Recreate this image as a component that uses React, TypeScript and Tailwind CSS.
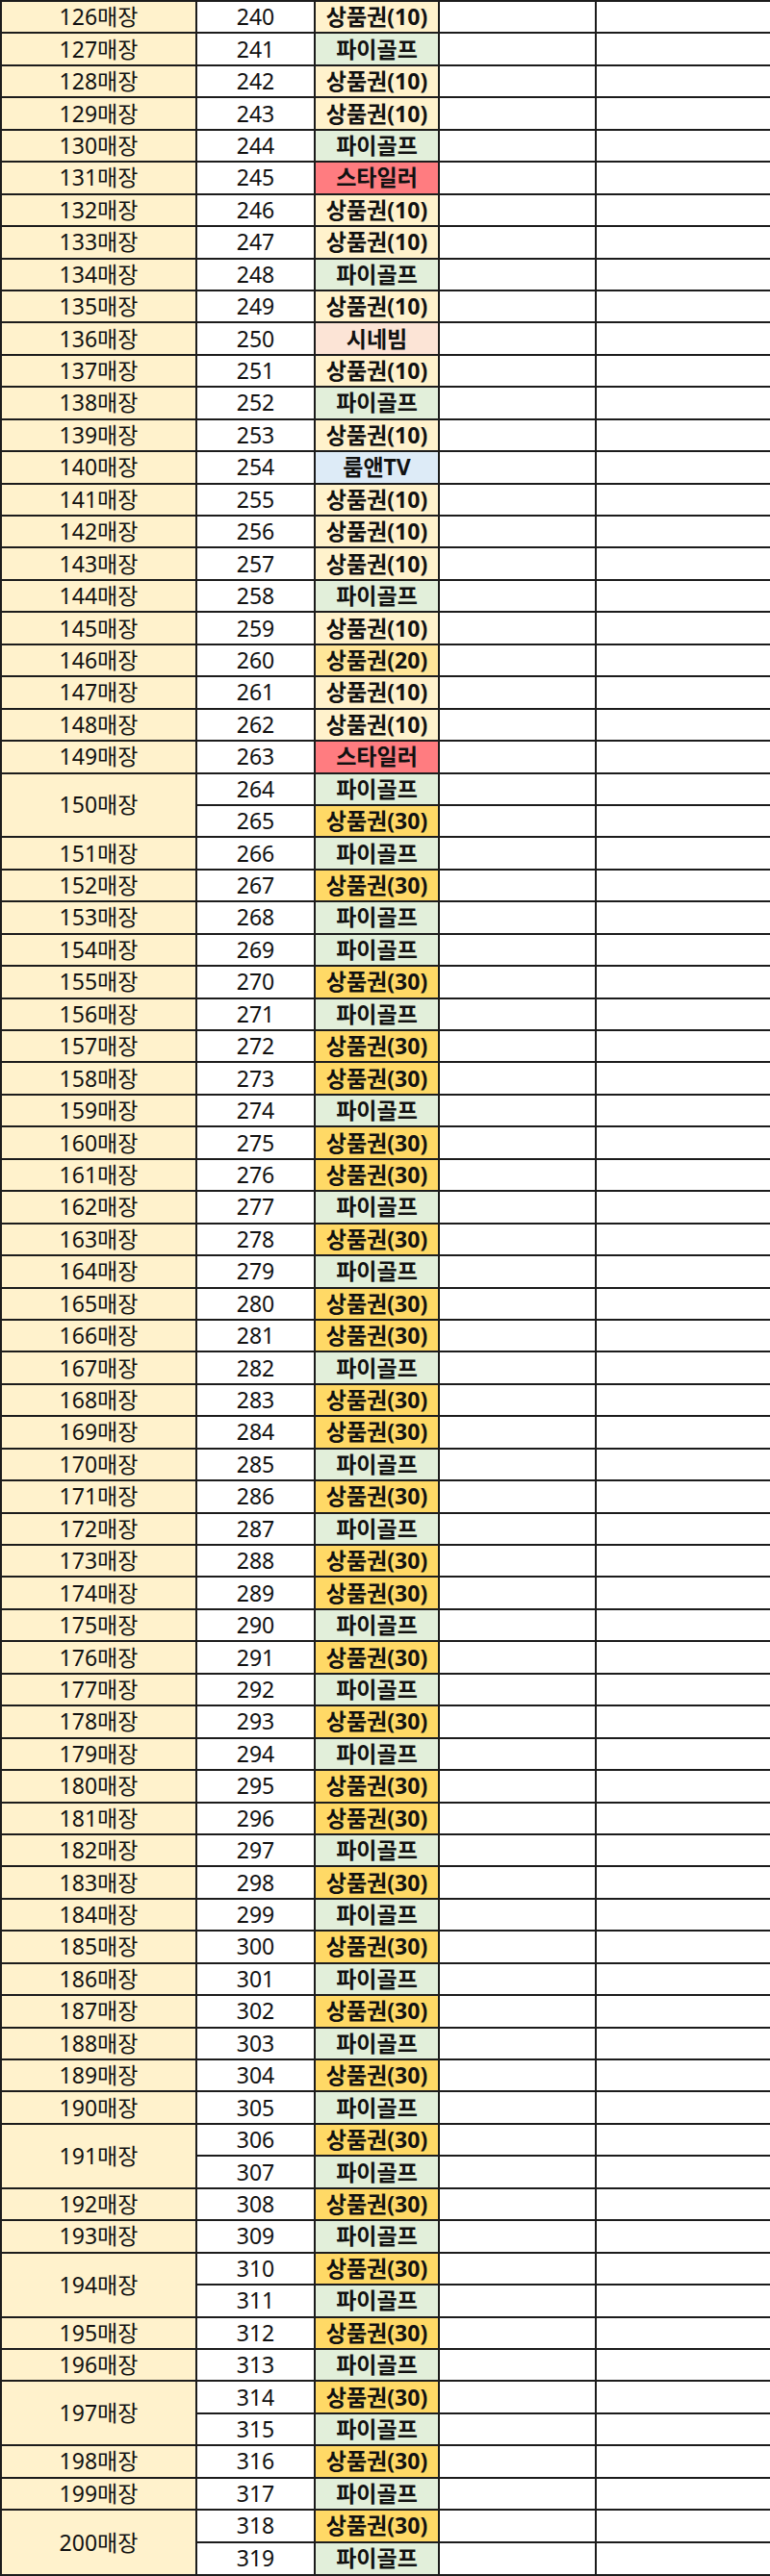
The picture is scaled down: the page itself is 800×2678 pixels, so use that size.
type Item = { no: number; prize: string }
type Store = { name: string; items: Item[] }

const prizeStyle: Record<string, string> = {
  '상품권(10)': 'bg-[#fff2cc]',
  '상품권(20)': 'bg-[#ffe699]',
  '상품권(30)': 'bg-[#ffd966]',
  '파이골프': 'bg-[#e2efda]',
  '스타일러': 'bg-[#ff7c80]',
  '시네빔': 'bg-[#fce4d6]',
  '룸앤TV': 'bg-[#ddebf7]',
}

const A = '상품권(10)'
const B = '상품권(20)'
const C = '상품권(30)'
const G = '파이골프'
const S = '스타일러'
const M = '시네빔'
const T = '룸앤TV'

// 매장별 경품 순서 (240번부터)
const layout: string[][] = [
  [A], [G], [A], [A], [G], [S], [A], [A], [G], [A],
  [M], [A], [G], [A], [T], [A], [A], [A], [G], [A],
  [B], [A], [A], [S], [G, C], [G], [C], [G], [G], [C],
  [G], [C], [C], [G], [C], [C], [G], [C], [G], [C],
  [C], [G], [C], [C], [G], [C], [G], [C], [C], [G],
  [C], [G], [C], [G], [C], [C], [G], [C], [G], [C],
  [G], [C], [G], [C], [G], [C, G], [C], [G], [C, G], [C],
  [G], [C, G], [C], [G], [C, G],
]

const stores: Store[] = (() => {
  let no = 240
  return layout.map((prizes, i) => ({
    name: `${126 + i}매장`,
    items: prizes.map((prize) => ({ no: no++, prize })),
  }))
})()

const cell = 'border-2 border-[#1c1c1c] text-center align-middle p-0'

export default function App() {
  return (
    <div
      className="w-[800px] bg-white text-[#111]"
      style={{ fontFamily: '"Noto Sans", "Noto Sans CJK KR", sans-serif' }}
    >
      <table className="w-[800px] h-[2678px] table-fixed border-collapse text-[23px] leading-none">
        <colgroup>
          <col className="w-[203px]" />
          <col className="w-[123px]" />
          <col className="w-[129px]" />
          <col className="w-[163px]" />
          <col className="w-[182px]" />
        </colgroup>
        <tbody>
          {stores.flatMap((store) =>
            store.items.map((item, idx) => (
              <tr key={item.no} className="h-[33px]">
                {idx === 0 && (
                  <td rowSpan={store.items.length} className={`${cell} bg-[#fff2cc]`}>
                    {store.name}
                  </td>
                )}
                <td className={cell}>{item.no}</td>
                <td className={`${cell} font-bold ${prizeStyle[item.prize]}`}>{item.prize}</td>
                <td className={cell} />
                <td className={cell} />
              </tr>
            ))
          )}
        </tbody>
      </table>
    </div>
  )
}
